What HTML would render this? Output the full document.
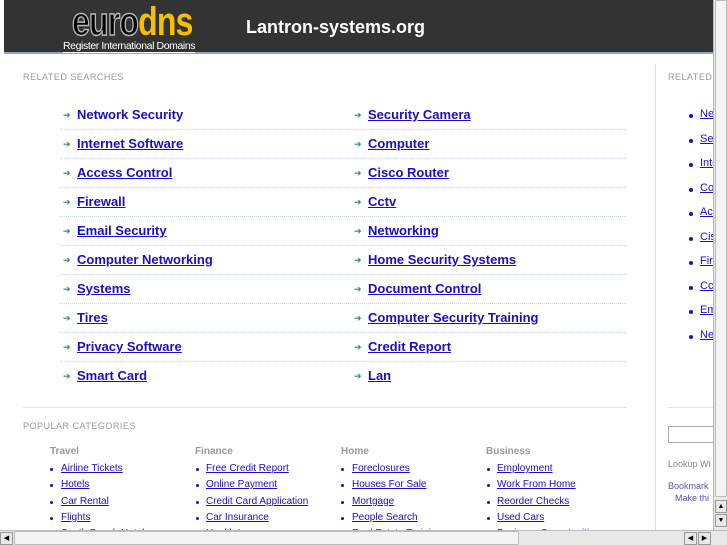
<!DOCTYPE html>
<html><head><style>
*{margin:0;padding:0;box-sizing:border-box}
body{width:727px;height:545px;overflow:hidden;background:#fff;font-family:"Liberation Sans",sans-serif;position:relative}
.hdr{position:absolute;left:4px;top:0;width:709px;height:54px;background:#333;border-bottom:2px solid #8fa6c8}
.logo{position:absolute;left:68px;top:3px;font:bold 40px/38px "Liberation Sans",sans-serif;letter-spacing:-1px;transform:scaleX(0.8);transform-origin:left;white-space:nowrap}
.logo .e{color:#000;-webkit-text-stroke:1.5px #bbb}
.logo .d{color:#f5c000}
.reg{position:absolute;left:59px;top:40px;color:#fff;font-size:10.5px;border-bottom:1px solid #fff;line-height:12px;letter-spacing:-0.4px;white-space:nowrap}
.title{position:absolute;left:242px;top:17px;color:#fff;font-size:18px;font-weight:bold}
.lbl{position:absolute;color:#999;font-size:9px;letter-spacing:0.5px}
.rs{position:absolute;font-size:13px;font-weight:bold;color:#1a0dcc;text-decoration:underline}
.ar{position:absolute;color:#2a8a6a;font-size:9px}
.sep{position:absolute;left:60px;width:567px;border-top:1px dotted #c8d3e6}
.vd{position:absolute;left:655px;top:64px;height:466px;border-left:1px solid #d6e0f0}
.sb{position:absolute;font-size:11px;color:#1a0dcc;text-decoration:underline}
.bl{position:absolute;width:4px;height:4px;border-radius:2px;background:#1a0dcc}
.ch{position:absolute;top:445px;color:#999;font-size:10px;font-weight:bold}
.ci{position:absolute;font-size:10px;color:#1a0dcc;text-decoration:underline;white-space:nowrap}
.vs{position:absolute;left:713px;top:0;width:14px;height:530px;background:#e8e8e8;border-left:1px solid #bbb}
.hs{position:absolute;left:0;top:530px;width:727px;height:15px;background:#e8e8e8;border-top:1px solid #bbb}
</style></head><body>
<div class="hdr">
<div class="logo"><span class="e">euro</span><span class="d">dns</span></div>
<div class="reg">Register International Domains</div>
<div class="title">Lantron-systems.org</div>
</div>
<div class="lbl" style="left:23px;top:72px">RELATED SEARCHES</div>
<div class="vd"></div>
<div class="lbl" style="left:668px;top:72px">RELATED</div>

<div class="ar" style="left:63px;top:110px">➔</div><a class="rs" style="left:77px;top:107px;text-decoration:none">Network Security</a>
<div class="ar" style="left:354px;top:110px">➔</div><a class="rs" style="left:368px;top:107px">Security Camera</a>
<div class="sep" style="top:129px"></div>
<div class="ar" style="left:63px;top:139px">➔</div><a class="rs" style="left:77px;top:136px">Internet Software</a>
<div class="ar" style="left:354px;top:139px">➔</div><a class="rs" style="left:368px;top:136px">Computer</a>
<div class="sep" style="top:158px"></div>
<div class="ar" style="left:63px;top:168px">➔</div><a class="rs" style="left:77px;top:165px">Access Control</a>
<div class="ar" style="left:354px;top:168px">➔</div><a class="rs" style="left:368px;top:165px">Cisco Router</a>
<div class="sep" style="top:187px"></div>
<div class="ar" style="left:63px;top:197px">➔</div><a class="rs" style="left:77px;top:194px">Firewall</a>
<div class="ar" style="left:354px;top:197px">➔</div><a class="rs" style="left:368px;top:194px">Cctv</a>
<div class="sep" style="top:216px"></div>
<div class="ar" style="left:63px;top:226px">➔</div><a class="rs" style="left:77px;top:223px">Email Security</a>
<div class="ar" style="left:354px;top:226px">➔</div><a class="rs" style="left:368px;top:223px">Networking</a>
<div class="sep" style="top:245px"></div>
<div class="ar" style="left:63px;top:255px">➔</div><a class="rs" style="left:77px;top:252px">Computer Networking</a>
<div class="ar" style="left:354px;top:255px">➔</div><a class="rs" style="left:368px;top:252px">Home Security Systems</a>
<div class="sep" style="top:274px"></div>
<div class="ar" style="left:63px;top:284px">➔</div><a class="rs" style="left:77px;top:281px">Systems</a>
<div class="ar" style="left:354px;top:284px">➔</div><a class="rs" style="left:368px;top:281px">Document Control</a>
<div class="sep" style="top:303px"></div>
<div class="ar" style="left:63px;top:313px">➔</div><a class="rs" style="left:77px;top:310px">Tires</a>
<div class="ar" style="left:354px;top:313px">➔</div><a class="rs" style="left:368px;top:310px">Computer Security Training</a>
<div class="sep" style="top:332px"></div>
<div class="ar" style="left:63px;top:342px">➔</div><a class="rs" style="left:77px;top:339px">Privacy Software</a>
<div class="ar" style="left:354px;top:342px">➔</div><a class="rs" style="left:368px;top:339px">Credit Report</a>
<div class="sep" style="top:361px"></div>
<div class="ar" style="left:63px;top:371px">➔</div><a class="rs" style="left:77px;top:368px">Smart Card</a>
<div class="ar" style="left:354px;top:371px">➔</div><a class="rs" style="left:368px;top:368px">Lan</a>
<div class="sep" style="top:407px;left:23px;width:604px;border-top:1px solid #dde5f2"></div>

<div class="bl" style="left:689px;top:114px"></div><a class="sb" style="left:700px;top:108px">Ne</a>
<div class="bl" style="left:689px;top:139px"></div><a class="sb" style="left:700px;top:133px">Se</a>
<div class="bl" style="left:689px;top:163px"></div><a class="sb" style="left:700px;top:157px">Inte</a>
<div class="bl" style="left:689px;top:188px"></div><a class="sb" style="left:700px;top:182px">Co</a>
<div class="bl" style="left:689px;top:212px"></div><a class="sb" style="left:700px;top:206px">Acc</a>
<div class="bl" style="left:689px;top:237px"></div><a class="sb" style="left:700px;top:231px">Cis</a>
<div class="bl" style="left:689px;top:261px"></div><a class="sb" style="left:700px;top:255px">Fir</a>
<div class="bl" style="left:689px;top:286px"></div><a class="sb" style="left:700px;top:280px">Cc</a>
<div class="bl" style="left:689px;top:310px"></div><a class="sb" style="left:700px;top:304px">Em</a>
<div class="bl" style="left:689px;top:335px"></div><a class="sb" style="left:700px;top:329px">Ne</a>
<div style="position:absolute;left:668px;top:407px;width:50px;border-top:1px solid #dde5f2"></div>
<div style="position:absolute;left:668px;top:426px;width:50px;height:17px;border:1px solid #aaa"></div>
<div style="position:absolute;left:668px;top:459px;font-size:9px;color:#888">Lookup WI</div>
<div style="position:absolute;left:668px;top:481px;font-size:9px;color:#55a">Bookmark</div>
<div style="position:absolute;left:675px;top:493px;font-size:9px;color:#55a">Make thi</div>

<div class="lbl" style="left:23px;top:421px">POPULAR CATEGORIES</div>
<div class="ch" style="left:50px;top:446px">Travel</div>
<div class="ch" style="left:195px;top:446px">Finance</div>
<div class="ch" style="left:341px;top:446px">Home</div>
<div class="ch" style="left:486px;top:446px">Business</div>

<div class="bl" style="left:50px;top:468px;width:3px;height:3px"></div><a class="ci" style="left:61px;top:463px">Airline Tickets</a>
<div class="bl" style="left:50px;top:484px;width:3px;height:3px"></div><a class="ci" style="left:61px;top:479px">Hotels</a>
<div class="bl" style="left:50px;top:501px;width:3px;height:3px"></div><a class="ci" style="left:61px;top:496px">Car Rental</a>
<div class="bl" style="left:50px;top:517px;width:3px;height:3px"></div><a class="ci" style="left:61px;top:512px">Flights</a>
<a class="ci" style="left:61px;top:528px">South Beach Hotels</a>
<div class="bl" style="left:196px;top:468px;width:3px;height:3px"></div><a class="ci" style="left:206px;top:463px">Free Credit Report</a>
<div class="bl" style="left:196px;top:484px;width:3px;height:3px"></div><a class="ci" style="left:206px;top:479px">Online Payment</a>
<div class="bl" style="left:196px;top:501px;width:3px;height:3px"></div><a class="ci" style="left:206px;top:496px">Credit Card Application</a>
<div class="bl" style="left:196px;top:517px;width:3px;height:3px"></div><a class="ci" style="left:206px;top:512px">Car Insurance</a>
<a class="ci" style="left:206px;top:528px">Health Insurance</a>
<div class="bl" style="left:341px;top:468px;width:3px;height:3px"></div><a class="ci" style="left:352px;top:463px">Foreclosures</a>
<div class="bl" style="left:341px;top:484px;width:3px;height:3px"></div><a class="ci" style="left:352px;top:479px">Houses For Sale</a>
<div class="bl" style="left:341px;top:501px;width:3px;height:3px"></div><a class="ci" style="left:352px;top:496px">Mortgage</a>
<div class="bl" style="left:341px;top:517px;width:3px;height:3px"></div><a class="ci" style="left:352px;top:512px">People Search</a>
<a class="ci" style="left:352px;top:528px">Real Estate Training</a>
<div class="bl" style="left:487px;top:468px;width:3px;height:3px"></div><a class="ci" style="left:497px;top:463px">Employment</a>
<div class="bl" style="left:487px;top:484px;width:3px;height:3px"></div><a class="ci" style="left:497px;top:479px">Work From Home</a>
<div class="bl" style="left:487px;top:501px;width:3px;height:3px"></div><a class="ci" style="left:497px;top:496px">Reorder Checks</a>
<div class="bl" style="left:487px;top:517px;width:3px;height:3px"></div><a class="ci" style="left:497px;top:512px">Used Cars</a>
<a class="ci" style="left:497px;top:528px">Business Opportunities</a>

<div class="vs">
<div style="position:absolute;left:1px;top:0;width:12px;height:497px;background:#f4f4f4;border:1px solid #bbb;border-radius:2px"></div>
<div style="position:absolute;left:1px;top:500px;width:12px;height:13px;border:1px solid #999;font-size:7px;text-align:center;line-height:12px">▲</div>
<div style="position:absolute;left:1px;top:514px;width:12px;height:13px;border:1px solid #999;font-size:7px;text-align:center;line-height:12px">▼</div>
</div>
<div class="hs">
<div style="position:absolute;left:0;top:1px;width:13px;height:13px;border:1px solid #999;font-size:7px;text-align:center;line-height:12px">◀</div>
<div style="position:absolute;left:14px;top:0;width:505px;height:14px;background:#f4f4f4;border:1px solid #bbb;border-radius:2px"></div>
<div style="position:absolute;left:684px;top:1px;width:13px;height:13px;border:1px solid #999;font-size:7px;text-align:center;line-height:12px">◀</div>
<div style="position:absolute;left:698px;top:1px;width:13px;height:13px;border:1px solid #999;font-size:7px;text-align:center;line-height:12px">▶</div>
</div>
</body></html>
